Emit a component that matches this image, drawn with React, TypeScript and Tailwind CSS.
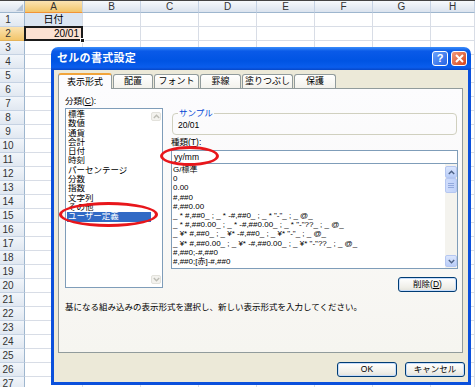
import React from "react";

const cols = ["A", "B", "C", "D", "E", "F", "G", "H"];
const rows = Array.from({ length: 27 }, (_, i) => i + 1);

const categories = [
  "標準",
  "数値",
  "通貨",
  "会計",
  "日付",
  "時刻",
  "パーセンテージ",
  "分数",
  "指数",
  "文字列",
  "その他",
  "ユーザー定義",
];

const formats = [
  "G/標準",
  "0",
  "0.00",
  "#,##0",
  "#,##0.00",
  '_ * #,##0_ ; _ * -#,##0_ ; _ * "-"_ ; _ @_',
  '_ * #,##0.00_ ; _ * -#,##0.00_ ; _ * "-"??_ ; _ @_',
  '_ ¥* #,##0_ ; _ ¥* -#,##0_ ; _ ¥* "-"_ ; _ @_',
  '_ ¥* #,##0.00_ ; _ ¥* -#,##0.00_ ; _ ¥* "-"??_ ; _ @_',
  "#,##0;-#,##0",
  "#,##0;[赤]-#,##0",
];

const tabs = [
  { label: "表示形式", w: "w-[54px]", active: true },
  { label: "配置", w: "w-[40px]" },
  { label: "フォント", w: "w-[45px]" },
  { label: "罫線", w: "w-[41px]" },
  { label: "塗りつぶし", w: "w-[51px]" },
  { label: "保護", w: "w-[42px]" },
];

const font = "font-['Liberation_Sans','Noto_Sans_CJK_JP',sans-serif]";

function Chevron({ up, color }: { up?: boolean; color: string }) {
  return (
    <svg width="7" height="5" viewBox="0 0 7 5">
      <path
        d={up ? "M0.8 4 L3.5 1.3 L6.2 4" : "M0.8 1 L3.5 3.7 L6.2 1"}
        fill="none"
        stroke={color}
        strokeWidth="1.4"
      />
    </svg>
  );
}

function Sheet() {
  return (
    <div className="flex flex-col border-t border-[#444]">
      <div className="flex h-[12px]">
        <div className="relative w-[25px] shrink-0 bg-[linear-gradient(#f6f9fc,#dbe3ee)] border-r border-b border-[#9eb6ce]">
          <svg className="absolute right-[1px] bottom-[1px]" width="7" height="7" viewBox="0 0 7 7">
            <path d="M7 0 L7 7 L0 7 Z" fill="#b4c3d6" />
          </svg>
        </div>
        {cols.map((c) => (
          <div
            key={c}
            className={`${c === "H" ? "flex-1" : "w-[58px] shrink-0"} ${
              c === "A"
                ? "bg-[linear-gradient(#fbe3b2,#f2c56a)] border-b-[#f29436]"
                : "bg-[linear-gradient(#f6f9fc,#dbe3ee)] border-b-[#9eb6ce]"
            } border-r border-r-[#c5d2e3] border-b flex items-center justify-center text-[10px] leading-none text-[#333]`}
          >
            {c}
          </div>
        ))}
      </div>
      {rows.map((r) => (
        <div key={r} className="flex h-[14px]">
          <div
            className={`w-[25px] shrink-0 pr-[8px] flex items-center justify-center text-[10px] leading-none text-[#333] border-b border-r ${
              r === 2
                ? "bg-[linear-gradient(#fbe3b2,#f2c56a)] border-r-[#f29436] border-b-[#e4b35a]"
                : "bg-[linear-gradient(#f1f5fa,#e1e8f1)] border-r-[#9eb6ce] border-b-[#c5d2e3]"
            }`}
          >
            {r}
          </div>
          {cols.map((c) => {
            const base = `${c === "H" ? "flex-1" : "w-[58px] shrink-0"} border-r border-b border-[#d8dde6]`;
            if (r === 1 && c === "A")
              return (
                <div key={c} className={`${base} bg-[#dbe5f1] flex items-center justify-center text-[10px] leading-none text-black`}>
                  日付
                </div>
              );
            if (r === 2 && c === "A")
              return (
                <div key={c} className={`${base} relative bg-[#fbe1d2] flex items-center justify-end pr-[3px] text-[10px] leading-none text-black`}>
                  20/01
                  <div className="absolute -inset-[1px] border-2 border-[#1a1a1a]" />
                  <div className="absolute -right-[3px] -bottom-[3px] w-[5px] h-[5px] bg-[#1a1a1a] border border-white" />
                </div>
              );
            return <div key={c} className={base} />;
          })}
        </div>
      ))}
    </div>
  );
}

function XpButton({ children, w }: { children: React.ReactNode; w: string }) {
  return (
    <div
      className={`${w} h-[15px] rounded-[3px] border border-[#003c74] bg-[linear-gradient(#ffffff,#f0efe9_70%,#e3e2da)] shadow-[inset_0_0_0_1px_#c6dcfb] flex items-center justify-center text-[8.5px] leading-none text-black`}
    >
      {children}
    </div>
  );
}

function Dialog() {
  return (
    <div className="absolute left-[51px] top-[47px] w-[420px] h-[338px] flex flex-col rounded-t-[7px]">
      <div className="h-[23px] rounded-t-[7px] bg-[linear-gradient(#3a8dfa,#0a5ae8_18%,#0054e3_60%,#0a5ded_88%,#0647c8)] flex items-center pl-[6px] pr-[4px]">
        <span className="text-white font-bold text-[11px] leading-none tracking-[0.3px]">セルの書式設定</span>
        <div className="ml-auto flex gap-[3px]">
          <div className="w-[16px] h-[15px] rounded-[3px] border border-white bg-[linear-gradient(135deg,#6aa2fb,#2662e4)] flex items-center justify-center text-white font-bold text-[11px] leading-none">
            ?
          </div>
          <div className="w-[16px] h-[15px] rounded-[3px] border border-white bg-[linear-gradient(135deg,#f39b7c,#d5421a)] flex items-center justify-center">
            <svg width="9" height="9" viewBox="0 0 9 9">
              <path d="M1 1 L8 8 M8 1 L1 8" stroke="white" strokeWidth="2" />
            </svg>
          </div>
        </div>
      </div>
      <div className="flex-1 bg-[#ece9d8] border-x-[3px] border-b-[3px] border-[#0b50dc] pt-[3px] pl-[4px] pr-[5px] flex flex-col">
        <div className="flex items-end h-[15px] gap-[1px]">
          {tabs.map((t) =>
            t.active ? (
              <div
                key={t.label}
                className={`${t.w} relative z-10 h-[16px] -mb-[1px] bg-[#fcfcfe] border border-[#919b9c] border-b-0 border-t-2 border-t-[#f1a43b] rounded-t-[3px] flex items-center justify-center text-[9px] leading-none text-black`}
              >
                {t.label}
              </div>
            ) : (
              <div
                key={t.label}
                className={`${t.w} h-[14px] bg-[linear-gradient(#ffffff,#f3f2ec)] border border-[#919b9c] border-b-0 rounded-t-[3px] flex items-center justify-center text-[9px] leading-none text-black`}
              >
                {t.label}
              </div>
            )
          )}
        </div>
        <div className="h-[265px] border border-[#919b9c] bg-[linear-gradient(#fcfcfe,#f6f5f0)] pl-[6px] flex flex-col">
          <div className="flex">
            <div className="w-[98px] flex flex-col">
              <div className="mt-[6px] h-[13px] text-[8.5px] leading-[13px] text-black">
                分類(<span className="underline">C</span>):
              </div>
              <div className="h-[180px] border border-[#7f9db9] bg-white flex">
                <div className="flex-1 pt-[1px] pl-[1px] flex flex-col">
                  {categories.map((c) => (
                    <div
                      key={c}
                      className={`h-[9.3px] text-[8.5px] leading-[9.3px] pl-[1px] whitespace-nowrap ${
                        c === "ユーザー定義" ? "bg-[#316ac5] text-white" : "text-black"
                      }`}
                    >
                      {c}
                    </div>
                  ))}
                </div>
                <div className="w-[11px] flex flex-col justify-between py-[3px] pr-[1px]">
                  <div className="h-[9px] rounded-[2px] border border-[#e3e2dc] bg-[#f3f2ee] flex items-center justify-center">
                    <Chevron up color="#bdbdb5" />
                  </div>
                  <div className="h-[9px] rounded-[2px] border border-[#e3e2dc] bg-[#f3f2ee] flex items-center justify-center">
                    <Chevron color="#bdbdb5" />
                  </div>
                </div>
              </div>
            </div>
            <div className="ml-[8px] w-[287px] pt-[19px] flex flex-col">
              <fieldset className="h-[27px] border border-[#d0d0bf] rounded-[4px] px-[5px] mx-[1px]">
                <legend className="px-[1px] text-[8.5px] leading-[10px] text-[#0046d5]">サンプル</legend>
                <div className="mt-[2px] text-[8.5px] leading-[10px] text-black">20/01</div>
              </fieldset>
              <div className="h-[15px] text-[8.5px] leading-[15px] text-black">
                種類(<span className="underline">T</span>):
              </div>
              <div className="h-[14px] border border-[#7f9db9] bg-white pl-[2px] text-[8.5px] leading-[12px] text-black">
                yy/mm
              </div>
              <div className="h-[105px] border border-[#7f9db9] border-t-0 bg-white flex">
                <div className="flex-1 pt-[1px] pl-[1px] flex flex-col overflow-hidden">
                  {formats.map((f) => (
                    <div key={f} className="h-[9.2px] text-[8px] leading-[9.2px] whitespace-pre text-black">
                      {f}
                    </div>
                  ))}
                </div>
                <div className="w-[12px] bg-[#f4f3ee] flex flex-col">
                  <div className="h-[12px] mt-[2px] rounded-[2px] border border-[#b5c7f1] bg-[linear-gradient(#dbe6fd,#b9cdf8)] flex items-center justify-center">
                    <Chevron up color="#4d6185" />
                  </div>
                  <div className="h-[15px] rounded-[2px] border border-[#b5c7f1] bg-[linear-gradient(90deg,#cfdcfb,#c0d2f9)] flex flex-col items-center justify-center gap-[1px]">
                    <div className="w-[6px] h-[1px] bg-[#92a9dd]" />
                    <div className="w-[6px] h-[1px] bg-[#92a9dd]" />
                    <div className="w-[6px] h-[1px] bg-[#92a9dd]" />
                  </div>
                  <div className="flex-1" />
                  <div className="h-[12px] mb-[1px] rounded-[2px] border border-[#b5c7f1] bg-[linear-gradient(#dbe6fd,#b9cdf8)] flex items-center justify-center">
                    <Chevron color="#4d6185" />
                  </div>
                </div>
              </div>
              <div className="mt-[8px] flex justify-end pr-[1px]">
                <XpButton w="w-[59px]">
                  削除(<span className="underline">D</span>)
                </XpButton>
              </div>
            </div>
          </div>
          <div className="mt-[10px] text-[8.5px] leading-[10px] text-black whitespace-nowrap">
            基になる組み込みの表示形式を選択し、新しい表示形式を入力してください。
          </div>
        </div>
        <div className="mt-[9px] flex justify-end gap-[8px] -mr-[2px]">
          <XpButton w="w-[60px]">OK</XpButton>
          <XpButton w="w-[60px]">キャンセル</XpButton>
        </div>
      </div>
    </div>
  );
}

export default function App() {
  return (
    <div className={`relative w-[475px] h-[387px] overflow-hidden bg-white ${font}`}>
      <Sheet />
      <Dialog />
      <div className="absolute left-[59px] top-[202px] w-[99px] h-[25px] rounded-[50%] border-[3px] border-[#e8161b]" />
      <div className="absolute left-[160px] top-[146px] w-[59px] h-[20px] rounded-[50%] border-[3px] border-[#e8161b]" />
    </div>
  );
}
